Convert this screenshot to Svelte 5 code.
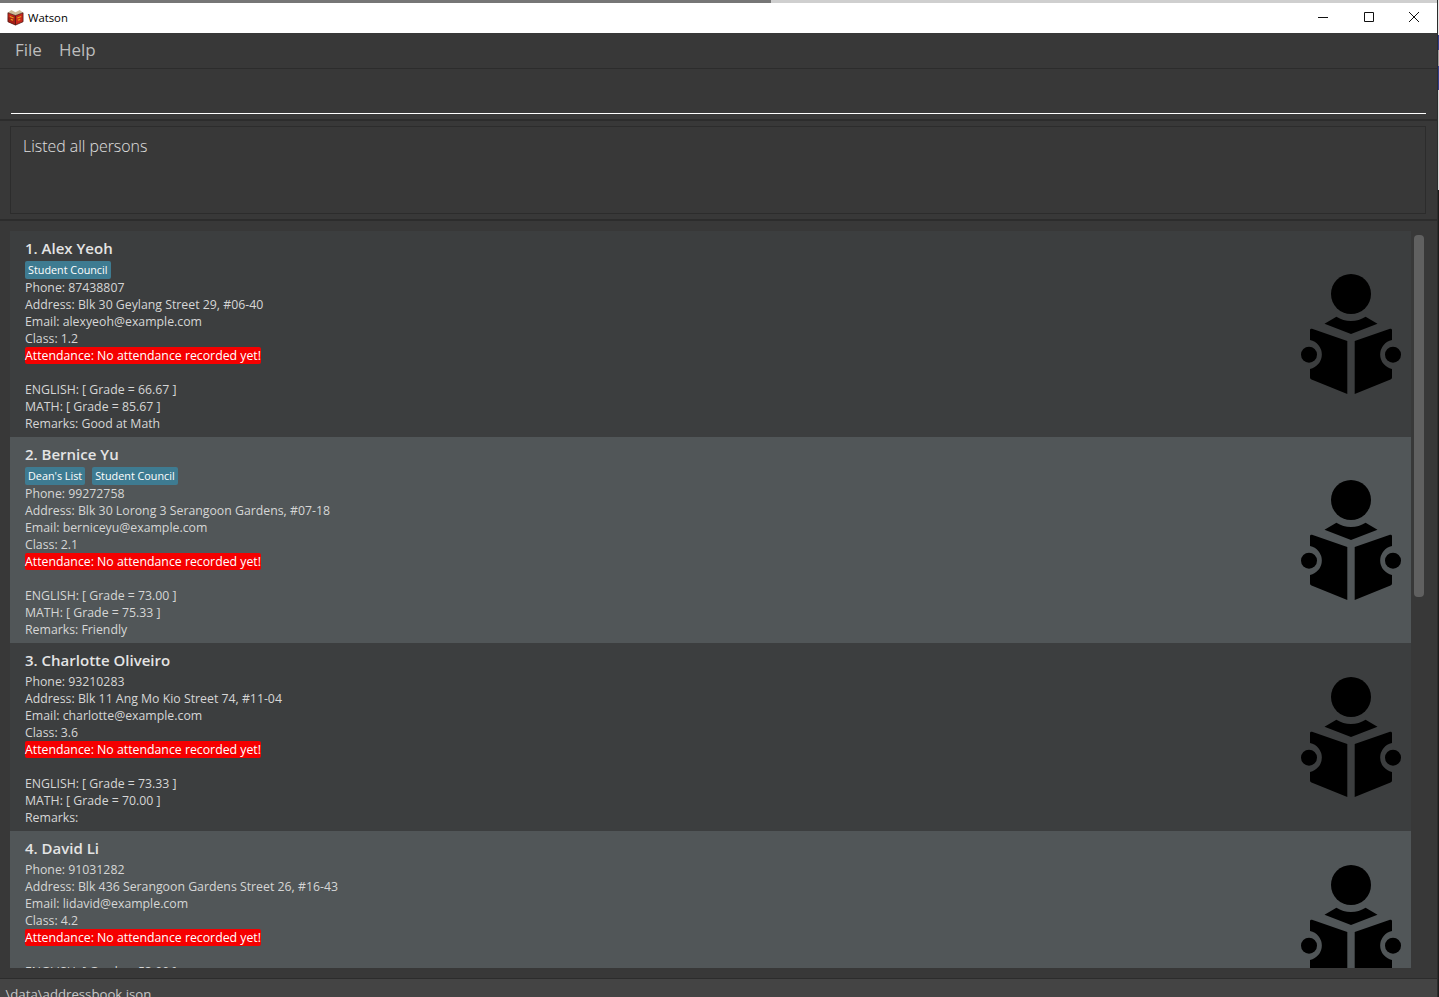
<script lang="ts">
	const students = [
		{
			name: 'Alex Yeoh',
			tags: ['Student Council'],
			phone: '87438807',
			address: 'Blk 30 Geylang Street 29, #06-40',
			email: 'alexyeoh@example.com',
			cls: '1.2',
			english: '66.67',
			math: '85.67',
			remarks: 'Good at Math'
		},
		{
			name: 'Bernice Yu',
			tags: ["Dean's List", 'Student Council'],
			phone: '99272758',
			address: 'Blk 30 Lorong 3 Serangoon Gardens, #07-18',
			email: 'berniceyu@example.com',
			cls: '2.1',
			english: '73.00',
			math: '75.33',
			remarks: 'Friendly'
		},
		{
			name: 'Charlotte Oliveiro',
			tags: [],
			phone: '93210283',
			address: 'Blk 11 Ang Mo Kio Street 74, #11-04',
			email: 'charlotte@example.com',
			cls: '3.6',
			english: '73.33',
			math: '70.00',
			remarks: ''
		},
		{
			name: 'David Li',
			tags: [],
			phone: '91031282',
			address: 'Blk 436 Serangoon Gardens Street 26, #16-43',
			email: 'lidavid@example.com',
			cls: '4.2',
			english: '53.00',
			math: '62.00',
			remarks: ''
		}
	];
</script>

<div class="screen">
	<div class="window">
		<div class="edge"></div>
		<div class="titlebar">
			<svg class="app-icon" viewBox="0 0 18 18" aria-hidden="true">
				<path d="M1 4 L9 7 L17 4 V13.5 L9 17 L1 13.5 Z" fill="#c8281c" />
				<path d="M9 7 V17 L1 13.5 V9 Z" fill="#a81f16" />
				<path d="M1 4 L4.5 1 L9 3.5 L13.5 1 L17 4 L9 7 Z" fill="#cdbb98" />
				<path d="M3 8 L7 9.5 M11 9.5 L15 8 M4 11 L6.5 12 M11.5 12 L14 11" stroke="#e8a21c" stroke-width="1.2" />
				<path d="M1 4 L9 7 L17 4 M9 7 V17 M1 4 V13.5 L9 17 L17 13.5 V4" stroke="#4a1712" stroke-width="0.8" fill="none" />
			</svg>
			<span class="title">Watson</span>
			<div class="controls">
				<svg viewBox="0 0 12 12" aria-hidden="true"><path d="M1 6.5 H11" /></svg>
				<svg viewBox="0 0 12 12" aria-hidden="true"><path d="M1.5 1.5 H10.5 V10.5 H1.5 Z" /></svg>
				<svg viewBox="0 0 12 12" aria-hidden="true"><path d="M1 1 L11 11 M11 1 L1 11" /></svg>
			</div>
		</div>

		<div class="menubar">
			<span>File</span>
			<span>Help</span>
		</div>

		<div class="command"><div class="command-input"></div></div>

		<div class="result-pane">
			<div class="result">Listed all persons</div>
		</div>

		<div class="list-pane">
			<div class="list">
				{#each students as s, i}
					<div class="card" class:even={i % 2 === 1}>
						<div class="info">
							<div class="name">{i + 1}. {s.name}</div>
							{#if s.tags.length}
								<div class="tags">
									{#each s.tags as tag}
										<span class="tag">{tag}</span>
									{/each}
								</div>
							{/if}
							<div class="line">Phone: {s.phone}</div>
							<div class="line">Address: {s.address}</div>
							<div class="line">Email: {s.email}</div>
							<div class="line">Class: {s.cls}</div>
							<div class="line"><span class="absent">Attendance: No attendance recorded yet!</span></div>
							<div class="line"></div>
							<div class="line">ENGLISH: [ Grade = {s.english} ]</div>
							<div class="line">MATH: [ Grade = {s.math} ]</div>
							<div class="line">Remarks: {s.remarks}</div>
						</div>
						<svg class="reader" viewBox="0 0 100 120" aria-hidden="true">
							<circle cx="50" cy="20" r="20" />
							<path d="M23.5 49.7 L35.4 42.7 A27 27 0 0 0 64.6 42.7 L76.5 49.7 L50 60 Z" />
							<path d="M11 54.8 L46.3 67 V120 L10.5 105.5 Q9 105 9 103.5 V95 A14.8 14.8 0 0 0 9 66 V56.2 Q9 54.4 11 54.8 Z" />
							<path d="M89 54.8 L53.7 67 V120 L89.5 105.5 Q91 105 91 103.5 V95 A14.8 14.8 0 0 1 91 66 V56.2 Q91 54.4 89 54.8 Z" />
							<circle cx="8" cy="80.7" r="8" />
							<circle cx="92" cy="80.7" r="8" />
						</svg>
					</div>
				{/each}
			</div>
			<div class="track"><div class="thumb"></div></div>
		</div>

		<div class="status">.\data\addressbook.json</div>
	</div>
	<div class="desktop">
		<div class="strip white"></div>
		<div class="strip blue"></div>
		<div class="strip grey"></div>
		<div class="strip blue tall"></div>
		<div class="strip light"></div>
		<div class="strip black"></div>
	</div>
</div>

<style>
	:global(body) {
		background: #383838;
	}
	.screen {
		height: 997px;
		overflow: hidden;
		display: flex;
	}
	.window {
		flex: 1;
		min-width: 0;
		display: flex;
		flex-direction: column;
		background: #383838;
		font-family: 'Open Sans', 'Noto Sans', sans-serif;
		border-right: 1px solid #2c2c2c;
	}
	.edge {
		height: 3px;
		flex: none;
		background: linear-gradient(90deg, #767676 771px, #cfcfcf 771px);
	}
	.titlebar {
		height: 30px;
		flex: none;
		box-sizing: border-box;
		background: #fff;
		display: flex;
		align-items: center;
		padding: 0 0 2px 7px;
	}
	.app-icon { width: 17px; height: 17px; }
	.title {
		margin-left: 4px;
		font-size: 11.3px;
		color: #000;
	}
	.controls {
		margin-left: auto;
		display: flex;
		gap: 33.5px;
		padding-right: 17px;
	}
	.controls svg {
		width: 12px;
		height: 12px;
		fill: none;
		stroke: #111;
		stroke-width: 1;
	}
	.menubar {
		height: 36px;
		flex: none;
		box-sizing: border-box;
		border-bottom: 1px solid #2c2c2c;
		display: flex;
		align-items: center;
		gap: 17px;
		padding: 0 0 2px 15px;
		font-size: 17px;
		color: #bdbdbd;
	}
	.command {
		height: 52px;
		flex: none;
		box-sizing: border-box;
		padding: 0 11px;
		border-bottom: 2px solid #2c2c2c;
	}
	.command-input {
		height: 45px;
		box-sizing: border-box;
		border-bottom: 1px solid #fff;
	}
	.result-pane {
		height: 100px;
		flex: none;
		box-sizing: border-box;
		padding: 5px 11px 5px 10px;
		border-bottom: 2px solid #2c2c2c;
	}
	.result {
		height: 88px;
		box-sizing: border-box;
		border: 1px solid #2c2c2c;
		padding: 8px 12px;
		font-size: 15.9px;
		font-weight: 300;
		line-height: 22px;
		color: #e0e0e0;
	}
	.list-pane {
		flex: 1;
		min-height: 0;
		display: flex;
		padding: 10px 0 10px 10px;
		border-bottom: 1px solid #2c2c2c;
	}
	.list {
		width: 1401px;
		flex: none;
		overflow: hidden;
	}
	.card {
		display: flex;
		align-items: center;
		justify-content: space-between;
		background: #3c3e3f;
		padding: 6px 10px 5px 15px;
	}
	.card.even { background: #515658; }
	.name {
		font-size: 15px;
		font-weight: 600;
		line-height: 22px;
		margin-bottom: 2px;
		color: #e4e4e4;
	}
	.tags {
		display: flex;
		gap: 7px;
		height: 18px;
	}
	.tag {
		background: #3e7b91;
		border-radius: 2px;
		padding: 0 3px;
		font-size: 10.8px;
		line-height: 18px;
		color: #fff;
	}
	.line {
		height: 17px;
		font-size: 12.3px;
		line-height: 17px;
		color: #d6d6d6;
		white-space: nowrap;
	}
	.absent {
		display: inline-block;
		background: #f50000;
		border-radius: 2px;
		color: #fff;
	}
	.reader {
		width: 100px;
		height: 120px;
		flex: none;
		margin-bottom: 1px;
		fill: #000;
	}
	.track {
		flex: none;
		width: 10px;
		margin: 4px 0 0 3px;
	}
	.thumb {
		height: 362px;
		border-radius: 4px;
		background: #606060;
	}
	.status {
		height: 18px;
		flex: none;
		background: #444;
		padding-left: 2px;
		font-size: 13.2px;
		line-height: 31px;
		color: #c8c8c8;
		overflow: hidden;
	}
	.desktop {
		width: 1px;
		flex: none;
		display: flex;
		flex-direction: column;
		background: #1c1c1c;
	}
	.strip { height: 15px; }
	.white { height: 35px; background: #e6e6e6; }
	.blue { background: #33408f; }
	.blue.tall { height: 24px; }
	.grey { height: 16px; background: #a0a0a0; }
	.light { height: 100px; background: #d8d8d8; }
	.black { flex: 1; background: #1c1c1c; }
</style>
